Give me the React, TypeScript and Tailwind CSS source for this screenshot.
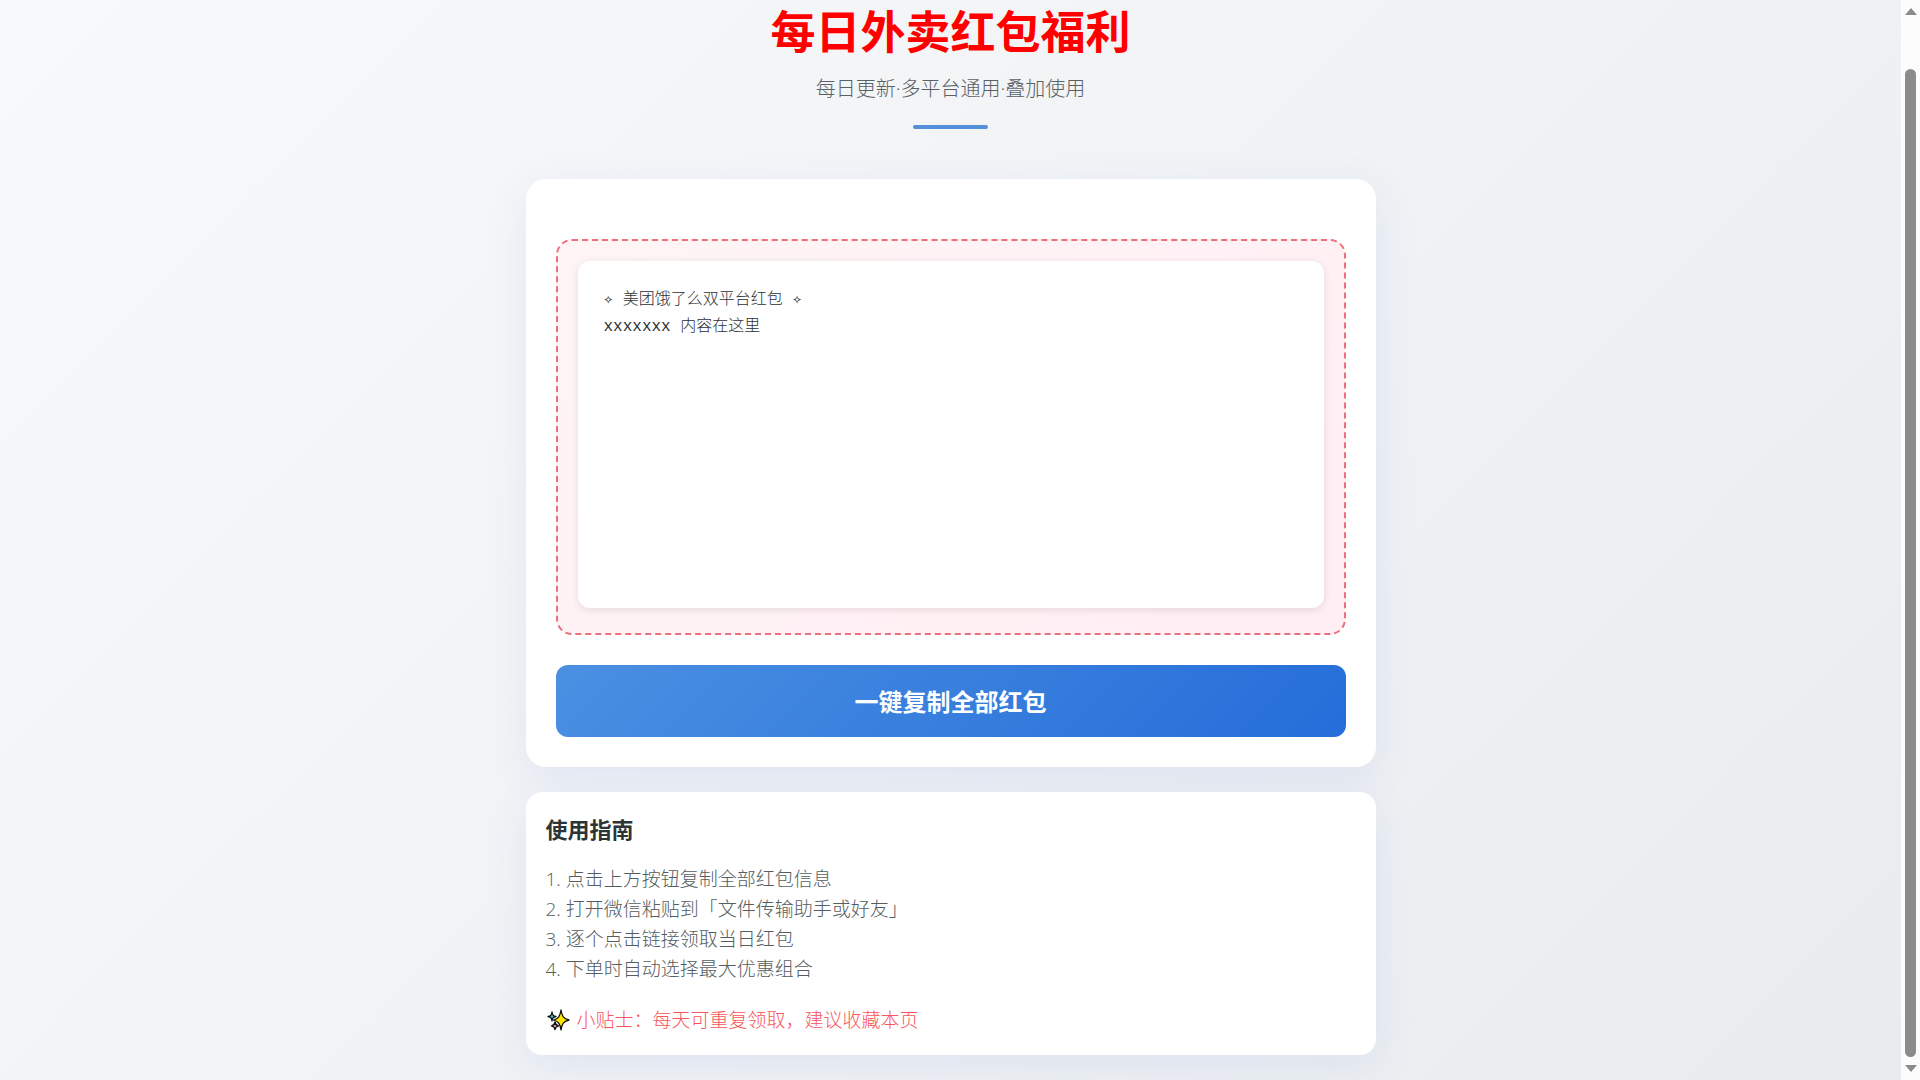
import { ReactElement } from 'react';

const steps = [
  '点击上方按钮复制全部红包信息',
  '打开微信粘贴到「文件传输助手或好友」',
  '逐个点击链接领取当日红包',
  '下单时自动选择最大优惠组合',
];

const content = '✧ 美团饿了么双平台红包 ✧\nxxxxxxx 内容在这里';

const Sparkles = (): ReactElement => (
  <svg className="w-6 h-6 shrink-0" viewBox="0 0 24 24" stroke="#111" strokeWidth="1.3" strokeLinejoin="round" aria-hidden="true">
    <path fill="#3fb8d8" d="M6 4 C6.5 7 7 8 10 8.500 C7 9 6.500 10 6 13 C5.500 10 5 9 2 8.500 C5 8 5.500 7 6 4Z" />
    <path fill="#f59ac0" d="M9 14 C9.500 16.500 10 17.300 12.500 17.800 C10 18.300 9.500 19 9 21.500 C8.500 19 8 18.300 5.500 17.800 C8 17.300 8.500 16.500 9 14Z" />
    <path fill="#ffe600" d="M15 2 C16 8.500 17.500 10.500 23 12 C17.500 13.500 16 15.500 15 22 C14 15.500 12.500 13.500 7.500 12 C12.500 10.500 14 8.500 15 2Z" />
  </svg>
);

const ScrollBar = (): ReactElement => (
  <div className="w-[19px] shrink-0 bg-[#fcfcfc] flex flex-col items-center pt-2 pb-2" aria-hidden="true">
    <svg className="w-3 h-[7px]" viewBox="0 0 12 7"><path d="M6 0L12 7H0Z" fill="#8b8b8b" /></svg>
    <div className="w-[11px] flex-1 mt-[54px] mb-2 rounded-full bg-[#8b8b8b]" />
    <svg className="w-3 h-[7px]" viewBox="0 0 12 7"><path d="M0 0H12L6 7Z" fill="#8b8b8b" /></svg>
  </div>
);

const App = (): ReactElement => {
  const copyAll = () => {
    navigator.clipboard?.writeText(content);
  };

  return (
    <div className="min-h-screen flex font-['Open_Sans','Noto_Sans_CJK_SC',sans-serif]">
      <div className="flex-1 bg-linear-135 from-[#f8f9fa] to-[#e9ecef]">
        <main className="w-full max-w-[850px] mx-auto pb-6">
          {/* Header */}
          <header className="flex flex-col items-center pt-1 mb-[50px]">
            <h1 className="text-[45px] leading-[56px] font-bold text-[#ff0000]">每日外卖红包福利</h1>
            <p className="text-[20px] leading-8 mt-[13px] font-light text-[#596167]">每日更新·多平台通用·叠加使用</p>
            <div className="w-[75px] h-1 mt-5 rounded-sm bg-[#5490d9]" />
          </header>

          {/* 红包内容 */}
          <section className="bg-white rounded-[20px] px-[30px] pt-[60px] pb-[30px] shadow-[0_10px_40px_rgba(74,120,226,0.1)]">
            <div className="border-2 border-dashed border-[#e9707c] rounded-2xl bg-linear-135 from-[#fff5f5] to-[#ffeef4] px-5 pt-5 pb-[25px]">
              <textarea
                readOnly
                aria-label="红包内容"
                value={content}
                className="block w-full h-[347px] resize-none outline-none rounded-xl bg-white px-[26px] py-[26px] text-[16px] leading-[27px] font-light text-[#2d3134] font-['Liberation_Mono','Noto_Sans_CJK_SC',monospace] shadow-[0_2px_8px_rgba(0,0,0,0.1)]"
              />
            </div>
            <button
              type="button"
              onClick={copyAll}
              className="block w-full h-[72px] mt-[30px] pt-[2px] rounded-xl bg-linear-135 from-[#4a90e2] to-[#256dd9] text-white text-[24px] font-bold"
            >
              一键复制全部红包
            </button>
          </section>

          {/* 使用指南 */}
          <section className="bg-white rounded-2xl mt-[25px] px-5 pt-[19px] pb-5 shadow-[0_10px_40px_rgba(74,120,226,0.1)]">
            <h2 className="text-[22px] leading-9 font-bold text-[#2d3436]">使用指南</h2>
            <ol className="mt-[17px] text-[19px] leading-[30px] font-light text-[#545d61]">
              {steps.map((step, i) => (
                <li key={step}>{i + 1}. {step}</li>
              ))}
            </ol>
            <p className="flex items-center gap-[7px] mt-[21px] text-[19px] leading-[30px] font-light text-[#f9555a]">
              <Sparkles />
              小贴士：每天可重复领取，建议收藏本页
            </p>
          </section>
        </main>
      </div>
      <ScrollBar />
    </div>
  );
};

export default App;
